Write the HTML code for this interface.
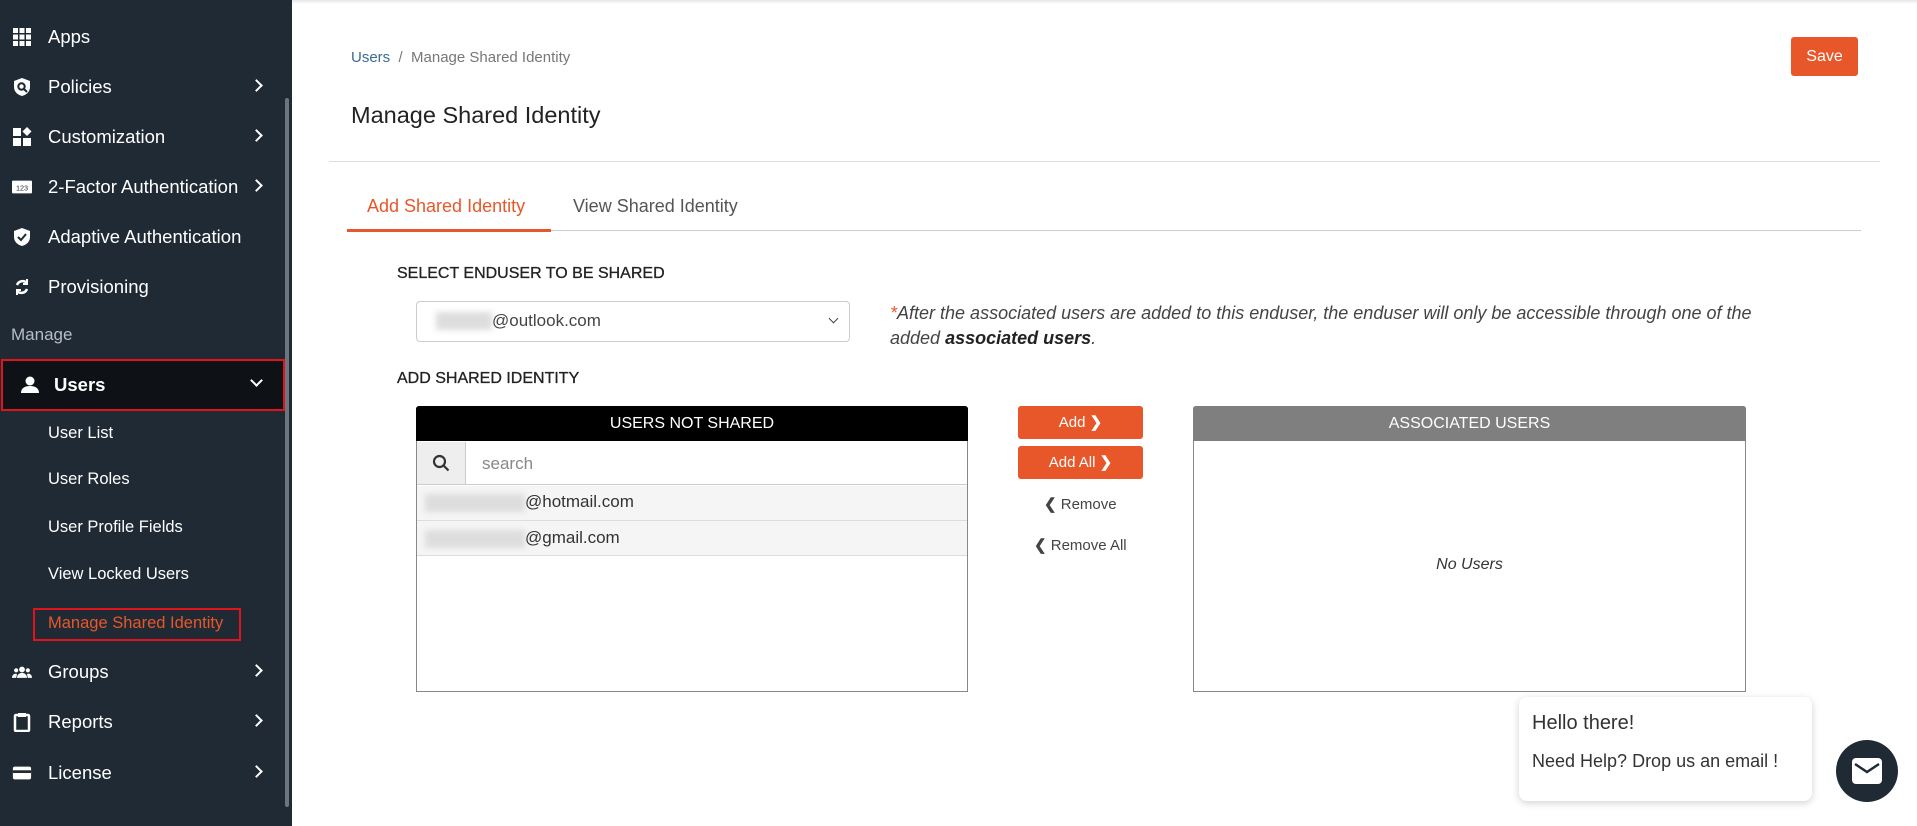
<!DOCTYPE html>
<html><head><meta charset="utf-8"><style>
*{box-sizing:border-box;margin:0;padding:0}
body{width:1917px;height:826px;overflow:hidden;background:#fff;font-family:"Liberation Sans",sans-serif;position:relative;color:#333}
.sb{position:absolute;left:0;top:0;width:292px;height:826px;background:#1f2a35}
.it{position:absolute;left:0;width:292px;color:#fff;font-size:18.5px;height:30px;line-height:30px}
.it .ic{position:absolute;left:12px;top:5px;width:20px;height:20px}
.it .tx{position:absolute;left:48px}
.it .ar{position:absolute;left:252px;top:9px;width:9px;height:9px;border-right:2.5px solid #fff;border-top:2.5px solid #fff;transform:rotate(45deg)}
.sub{position:absolute;left:48px;color:#fff;font-size:16.5px}
.a{position:absolute}
.btn{position:absolute;background:#e8572a;color:#fff;border-radius:3px;text-align:center;font-size:15px}
</style></head><body>
<div class="sb">
<div class="a" style="left:285px;top:98px;width:4px;height:709px;background:#6b7580;border-radius:2px"></div>
<div class="it" style="top:22px"><svg class="ic" viewBox="0 0 20 20" fill="#fff"><rect x="1" y="1" width="5" height="5"/><rect x="7.5" y="1" width="5" height="5"/><rect x="14" y="1" width="5" height="5"/><rect x="1" y="7.5" width="5" height="5"/><rect x="7.5" y="7.5" width="5" height="5"/><rect x="14" y="7.5" width="5" height="5"/><rect x="1" y="14" width="5" height="5"/><rect x="7.5" y="14" width="5" height="5"/><rect x="14" y="14" width="5" height="5"/></svg><span class="tx">Apps</span></div>
<div class="it" style="top:72px"><svg class="ic" viewBox="0 0 20 20"><path d="M10 1L2 4v6c0 5 4 8 8 9 4-1 8-4 8-9V4z" fill="#fff"/><circle cx="9.5" cy="9.5" r="3.2" fill="none" stroke="#1f2a35" stroke-width="2"/><path d="M12 12l3 3" stroke="#1f2a35" stroke-width="2"/></svg><span class="tx">Policies</span><span class="ar"></span></div>
<div class="it" style="top:122px"><svg class="ic" viewBox="0 0 20 20" fill="#fff"><rect x="1" y="1" width="8" height="8"/><rect x="1" y="11" width="8" height="8"/><rect x="11" y="11" width="8" height="8"/><path d="M15 0l4.5 4.5L15 9l-4.5-4.5z"/></svg><span class="tx">Customization</span><span class="ar"></span></div>
<div class="it" style="top:172px"><svg class="ic" viewBox="0 0 22 20"><rect x="0" y="3" width="22" height="14" rx="1" fill="#fff"/><text x="11" y="14" font-size="8" text-anchor="middle" fill="#1f2a35" font-family="Liberation Sans">123</text></svg><span class="tx">2-Factor Authentication</span><span class="ar"></span></div>
<div class="it" style="top:222px"><svg class="ic" viewBox="0 0 20 20"><path d="M10 1L2 4v6c0 5 4 8 8 9 4-1 8-4 8-9V4z" fill="#fff"/><path d="M6 10l3 3 5-6" stroke="#1f2a35" stroke-width="2" fill="none"/></svg><span class="tx">Adaptive Authentication</span></div>
<div class="it" style="top:272px"><svg class="ic" viewBox="0 0 20 20" fill="none" stroke="#fff" stroke-width="2.5"><path d="M15 6a6 6 0 0 0-10 2"/><path d="M5 14a6 6 0 0 0 10-2"/><path d="M15 2v5h-4" stroke-width="2"/><path d="M5 18v-5h4" stroke-width="2"/></svg><span class="tx">Provisioning</span></div>
<div class="a" style="left:11px;top:325px;color:#b9bec4;font-size:17px">Manage</div>
<div class="a" style="left:1px;top:359px;width:284px;height:52px;background:#0e1216;border:2px solid #e0141a"></div>
<div class="it" style="top:370px"><svg class="ic" viewBox="0 0 20 20" fill="#fff" style="left:20px"><circle cx="10" cy="6" r="4.5"/><path d="M1 18c0-5 4-7 9-7s9 2 9 7z"/></svg><span class="tx" style="left:54px;font-weight:bold">Users</span><span class="ar" style="transform:rotate(135deg);top:6px"></span></div>
<div class="sub" style="top:424px">User List</div>
<div class="sub" style="top:470px">User Roles</div>
<div class="sub" style="top:518px">User Profile Fields</div>
<div class="sub" style="top:565px">View Locked Users</div>
<div class="a" style="left:33px;top:608px;width:208px;height:33px;border:2px solid #e0141a"></div>
<div class="sub" style="top:614px;color:#e8572a">Manage Shared Identity</div>
<div class="it" style="top:657px"><svg class="ic" viewBox="0 0 24 20" fill="#fff"><circle cx="12" cy="7" r="3.5"/><circle cx="5" cy="8" r="2.5"/><circle cx="19" cy="8" r="2.5"/><path d="M6 17c0-4 3-6 6-6s6 2 6 6z"/><path d="M0 17c0-3 2-5 5-5l1 1-1 4z"/><path d="M24 17c0-3-2-5-5-5l-1 1 1 4z"/></svg><span class="tx">Groups</span><span class="ar"></span></div>
<div class="it" style="top:707px"><svg class="ic" viewBox="0 0 20 20"><rect x="3" y="3" width="14" height="16" rx="1" fill="none" stroke="#fff" stroke-width="2.5"/><rect x="6" y="1" width="8" height="4" fill="#fff"/></svg><span class="tx">Reports</span><span class="ar"></span></div>
<div class="it" style="top:758px"><svg class="ic" viewBox="0 0 22 20"><rect x="1" y="3" width="20" height="14" rx="2" fill="#fff"/><rect x="1" y="7" width="20" height="3" fill="#1f2a35"/></svg><span class="tx">License</span><span class="ar"></span></div>
</div>

<div class="a" style="left:292px;top:0;width:1625px;height:4px;background:linear-gradient(#e6e6e6,#fff)"></div>
<div class="a" style="left:351px;top:49px;font-size:15px;color:#777"><span style="color:#3a6a9a">Users</span> &nbsp;/ &nbsp;Manage Shared Identity</div>
<div class="btn" style="left:1791px;top:37px;width:67px;height:39px;line-height:39px;font-size:16px">Save</div>
<div class="a" style="left:351px;top:102px;font-size:23.5px;color:#222">Manage Shared Identity</div>
<div class="a" style="left:329px;top:161px;width:1551px;height:1px;background:#ddd"></div>
<div class="a" style="left:367px;top:196px;font-size:18px;color:#e8572a">Add Shared Identity</div>
<div class="a" style="left:573px;top:196px;font-size:18px;color:#555">View Shared Identity</div>
<div class="a" style="left:347px;top:230px;width:1514px;height:1px;background:#ccc"></div>
<div class="a" style="left:347px;top:229px;width:204px;height:3px;background:#e8572a"></div>

<div class="a" style="left:397px;top:265px;font-size:16px;color:#222;-webkit-text-stroke:0.3px #222">SELECT ENDUSER TO BE SHARED</div>
<div class="a" style="left:416px;top:301px;width:434px;height:41px;border:1px solid #ccc;border-radius:4px"></div>
<div class="a" style="left:436px;top:312px;width:56px;height:18px;background:#ddd;filter:blur(3px)"></div>
<div class="a" style="left:492px;top:311px;font-size:17px;color:#444">@outlook.com</div>
<div class="a" style="left:830px;top:315px;width:7px;height:7px;border-right:1.5px solid #444;border-bottom:1.5px solid #444;transform:rotate(45deg)"></div>
<div class="a" style="left:890px;top:301px;font-size:18px;font-style:italic;color:#444;line-height:25px;width:1000px"><span style="color:#e8572a">*</span>After the associated users are added to this enduser, the enduser will only be accessible through one of the<br>added <b style="color:#222">associated users</b>.</div>
<div class="a" style="left:397px;top:370px;font-size:16px;color:#222;-webkit-text-stroke:0.3px #222">ADD SHARED IDENTITY</div>

<div class="a" style="left:416px;top:406px;width:552px;height:286px;border:1px solid #888;border-radius:3px 3px 0 0"></div>
<div class="a" style="left:416px;top:406px;width:552px;height:35px;background:#000;color:#fff;text-align:center;line-height:35px;font-size:16px;border-radius:3px 3px 0 0">USERS NOT SHARED</div>
<div class="a" style="left:417px;top:442px;width:49px;height:43px;background:#eee;border-right:1px solid #ccc;border-bottom:1px solid #ccc"></div>
<svg class="a" style="left:432px;top:454px" width="18" height="18" viewBox="0 0 18 18" fill="none" stroke="#333" stroke-width="2.2"><circle cx="7.5" cy="7.5" r="5.5"/><path d="M11.5 11.5l5 5"/></svg>
<div class="a" style="left:466px;top:442px;width:501px;height:43px;border-bottom:1px solid #ccc"></div>
<div class="a" style="left:482px;top:454px;font-size:17px;color:#888">search</div>
<div class="a" style="left:417px;top:486px;width:550px;height:35px;background:#f5f5f5;border-bottom:1px solid #ddd"></div>
<div class="a" style="left:417px;top:521px;width:550px;height:35px;background:#f5f5f5;border-bottom:1px solid #ddd"></div>
<div class="a" style="left:425px;top:494px;width:100px;height:18px;background:#ddd;filter:blur(3px)"></div>
<div class="a" style="left:425px;top:530px;width:100px;height:18px;background:#ddd;filter:blur(3px)"></div>
<div class="a" style="left:525px;top:492px;font-size:17px;color:#333">@hotmail.com</div>
<div class="a" style="left:525px;top:528px;font-size:17px;color:#333">@gmail.com</div>

<div class="btn" style="left:1018px;top:406px;width:125px;height:33px;line-height:33px">Add <b>&#x276F;</b></div>
<div class="btn" style="left:1018px;top:446px;width:125px;height:33px;line-height:33px">Add All <b>&#x276F;</b></div>
<div class="a" style="left:1044px;top:495px;font-size:15px;color:#444"><b>&#x276E;</b> Remove</div>
<div class="a" style="left:1034px;top:536px;font-size:15px;color:#444"><b>&#x276E;</b> Remove All</div>

<div class="a" style="left:1193px;top:406px;width:553px;height:286px;border:1px solid #888;border-radius:3px 3px 0 0"></div>
<div class="a" style="left:1193px;top:406px;width:553px;height:35px;background:#7f7f7f;color:#fff;text-align:center;line-height:35px;font-size:16px;border-radius:3px 3px 0 0">ASSOCIATED USERS</div>
<div class="a" style="left:1193px;top:556px;width:553px;text-align:center;font-size:16px;font-style:italic;color:#333">No Users</div>

<div class="a" style="left:1519px;top:697px;width:293px;height:104px;background:#fff;border-radius:8px;box-shadow:0 2px 8px rgba(0,0,0,.18)"></div>
<div class="a" style="left:1532px;top:712px;font-size:20px;color:#333">Hello there!</div>
<div class="a" style="left:1532px;top:751px;font-size:18px;color:#333">Need Help? Drop us an email !</div>
<div class="a" style="left:1836px;top:740px;width:62px;height:62px;border-radius:50%;background:#1f2a35"></div>
<svg class="a" style="left:1851px;top:757px" width="32" height="28" viewBox="0 0 32 28"><rect x="1" y="1" width="30" height="26" rx="4" fill="#fff"/><path d="M4 7l12 8 12-8" fill="none" stroke="#1f2a35" stroke-width="2.5"/></svg>
</body></html>
